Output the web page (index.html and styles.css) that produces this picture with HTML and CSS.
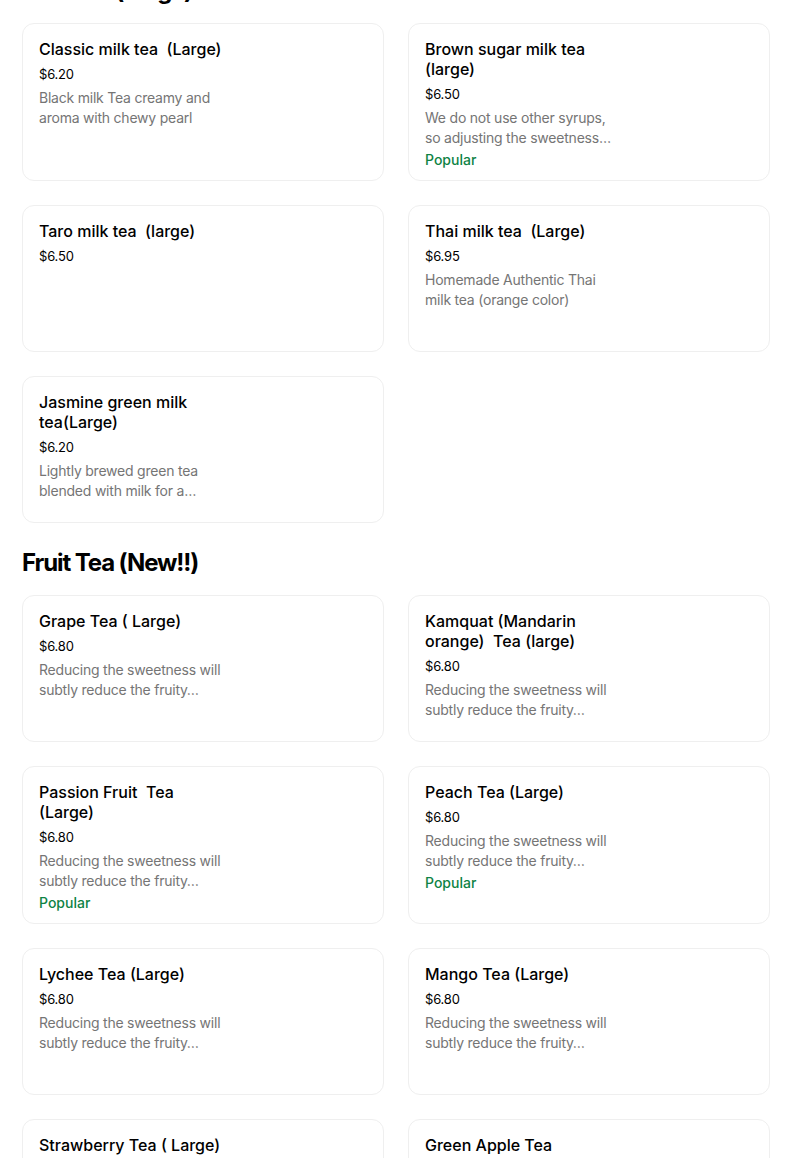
FILE: index.html
```html
<!DOCTYPE html>
<html lang="en">
<head>
<meta charset="utf-8">
<title>Menu</title>
<link rel="stylesheet" href="styles.css">
</head>
<body>
<main class="page">
  <section class="section first">
    <h2 class="section-title">Milk Tea (Large)</h2>
    <div class="grid">
      <div class="card"><div class="info">
        <div class="name">Classic milk tea&nbsp; (Large)</div>
        <div class="price">$6.20</div>
        <div class="desc">Black milk Tea creamy and aroma with chewy pearl</div>
      </div></div>
      <div class="card"><div class="info">
        <div class="name">Brown sugar milk tea (large)</div>
        <div class="price">$6.50</div>
        <div class="desc">We do not use other syrups, so adjusting the sweetness…</div>
        <div class="tag">Popular</div>
      </div></div>
      <div class="card"><div class="info">
        <div class="name">Taro milk tea&nbsp; (large)</div>
        <div class="price">$6.50</div>
      </div></div>
      <div class="card"><div class="info">
        <div class="name">Thai milk tea&nbsp; (Large)</div>
        <div class="price">$6.95</div>
        <div class="desc">Homemade Authentic Thai milk tea (orange color)</div>
      </div></div>
      <div class="card"><div class="info">
        <div class="name">Jasmine green milk tea(Large)</div>
        <div class="price">$6.20</div>
        <div class="desc">Lightly brewed green tea blended with milk for a…</div>
      </div></div>
    </div>
  </section>
  <section class="section">
    <h2 class="section-title">Fruit Tea (New!!)</h2>
    <div class="grid">
      <div class="card"><div class="info">
        <div class="name">Grape Tea ( Large)</div>
        <div class="price">$6.80</div>
        <div class="desc">Reducing the sweetness will subtly reduce the fruity…</div>
      </div></div>
      <div class="card"><div class="info">
        <div class="name">Kamquat (Mandarin orange)&nbsp; Tea (large)</div>
        <div class="price">$6.80</div>
        <div class="desc">Reducing the sweetness will subtly reduce the fruity…</div>
      </div></div>
      <div class="card"><div class="info">
        <div class="name">Passion Fruit&nbsp; Tea (Large)</div>
        <div class="price">$6.80</div>
        <div class="desc">Reducing the sweetness will subtly reduce the fruity…</div>
        <div class="tag">Popular</div>
      </div></div>
      <div class="card"><div class="info">
        <div class="name">Peach Tea (Large)</div>
        <div class="price">$6.80</div>
        <div class="desc">Reducing the sweetness will subtly reduce the fruity…</div>
        <div class="tag">Popular</div>
      </div></div>
      <div class="card"><div class="info">
        <div class="name">Lychee Tea (Large)</div>
        <div class="price">$6.80</div>
        <div class="desc">Reducing the sweetness will subtly reduce the fruity…</div>
      </div></div>
      <div class="card"><div class="info">
        <div class="name">Mango Tea (Large)</div>
        <div class="price">$6.80</div>
        <div class="desc">Reducing the sweetness will subtly reduce the fruity…</div>
      </div></div>
      <div class="card"><div class="info">
        <div class="name">Strawberry Tea ( Large)</div>
        <div class="price">$6.80</div>
        <div class="desc">Reducing the sweetness will subtly reduce the fruity…</div>
      </div></div>
      <div class="card"><div class="info">
        <div class="name">Green Apple Tea</div>
        <div class="price">$6.80</div>
        <div class="desc">Reducing the sweetness will subtly reduce the fruity…</div>
      </div></div>
    </div>
  </section>
</main>
</body>
</html>
```
FILE: styles.css
```css
html, body {
  margin: 0;
  padding: 0;
  background: #ffffff;
}
body {
  font-family: Inter, "Noto Sans", "Liberation Sans", sans-serif;
  color: #000000;
}
.page {
  padding: 0 34px 0 22px;
}
.section-title {
  font-size: 24px;
  line-height: 32px;
  font-weight: 700;
  margin: 24px 0 16px;
  letter-spacing: -1.1px;
}
.first .section-title {
  margin-top: -25px;
}
.grid {
  display: grid;
  grid-template-columns: 1fr 1fr;
  gap: 24px 24px;
}
.card {
  box-sizing: border-box;
  min-height: 147px;
  border: 1px solid #efefef;
  border-radius: 12px;
  padding: 15px 16px 10px;
  background: #ffffff;
}
.info {
  width: 188px;
}
.name {
  font-size: 16px;
  line-height: 20px;
  font-weight: 500;
  color: #000000;
}
.price {
  font-size: 13px;
  line-height: 20px;
  margin-top: 5px;
  letter-spacing: -0.2px;
  color: #000000;
}
.desc {
  font-size: 14px;
  line-height: 20px;
  margin-top: 4px;
  letter-spacing: -0.22px;
  color: #757575;
}
.tag {
  font-size: 14px;
  line-height: 20px;
  margin-top: 2px;
  font-weight: 500;
  color: #0e8345;
}
```
